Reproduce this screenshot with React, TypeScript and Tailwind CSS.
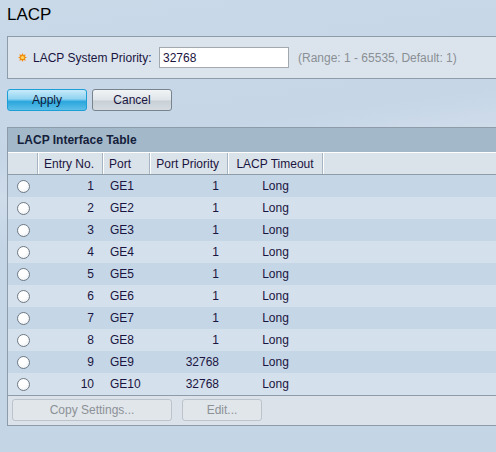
import React from "react";

const rows = [
  { n: 1, port: "GE1", pri: "1" },
  { n: 2, port: "GE2", pri: "1" },
  { n: 3, port: "GE3", pri: "1" },
  { n: 4, port: "GE4", pri: "1" },
  { n: 5, port: "GE5", pri: "1" },
  { n: 6, port: "GE6", pri: "1" },
  { n: 7, port: "GE7", pri: "1" },
  { n: 8, port: "GE8", pri: "1" },
  { n: 9, port: "GE9", pri: "32768" },
  { n: 10, port: "GE10", pri: "32768" },
];

function Star() {
  const pts: string[] = [];
  for (let i = 0; i < 16; i++) {
    const a = (Math.PI * 2 * i) / 16 - Math.PI / 2;
    const r = i % 2 === 0 ? 4.5 : 2.6;
    pts.push(`${(4.5 + r * Math.cos(a)).toFixed(2)},${(4.5 + r * Math.sin(a)).toFixed(2)}`);
  }
  return (
    <svg width="9" height="9" viewBox="0 0 9 9" className="shrink-0">
      <polygon points={pts.join(" ")} fill="#f08c10" />
      <circle cx="4.5" cy="4.5" r="1.6" fill="#ffd860" />
    </svg>
  );
}

function Radio() {
  return (
    <div className="w-[13px] h-[13px] rounded-full border border-[#6f7a84] bg-[radial-gradient(circle_at_40%_35%,#ffffff_40%,#e4e8ec_100%)]" />
  );
}

export default function App() {
  return (
    <div className="w-[496px] h-[452px] overflow-hidden bg-[linear-gradient(172deg,#c9d9e8_0%,#c6d6e7_30%,#cfdcea_38%,#c4d5e6_48%,#c4d5e6_100%)] font-['Liberation_Sans',Arial,sans-serif] text-[12px] text-[#1a1440]">
      <div className="pl-[7px] pt-[5px] h-[36px] text-[17px] leading-[20px] text-black">LACP</div>

      <div className="ml-[7px] h-[43px] border border-r-0 border-[#8d9ca8] bg-[#dbe4ed] flex items-center">
        <div className="w-[10px] shrink-0" />
        <Star />
        <span className="ml-[6px] w-[126px] shrink-0 whitespace-nowrap">LACP System Priority:</span>
        <div className="w-[130px] h-[21px] shrink-0 border border-[#a3a9ae] bg-white pl-[3px] flex items-center leading-none">32768</div>
        <span className="ml-[9px] text-[#8a8f94] whitespace-nowrap">(Range: 1 - 65535, Default: 1)</span>
      </div>

      <div className="mt-[10px] ml-[7px] flex gap-[5px]">
        <div className="w-[80px] h-[22px] rounded-[3px] border border-[#1e9ed6] bg-[linear-gradient(#c8ebfa,#8fd3f1_45%,#2aa6dd_58%,#5ebfe7)] flex items-center justify-center text-[#0e1a3a]">
          Apply
        </div>
        <div className="w-[80px] h-[22px] rounded-[3px] border border-[#77848e] bg-[linear-gradient(#f1f4f6,#dfe5ea_48%,#c8d0d6_56%,#d6dce1)] flex items-center justify-center">
          Cancel
        </div>
      </div>

      <div className="mt-[16px] ml-[7px] border-l border-t border-b border-[#8d9ca8]">
        <div className="h-[24px] bg-[#a3b9ca] pl-[9px] flex items-center font-bold text-[#14203a]">
          LACP Interface Table
        </div>
        <div className="h-[23px] border-t border-b border-t-white border-b-[#8d9ca8] bg-[#dae2ea] flex">
          <div className="w-[30px] shrink-0 border-r border-[#a7b5c2]" />
          <div className="w-[65px] shrink-0 border-r border-[#a7b5c2] shadow-[inset_1px_0_0_#fff] pr-[8px] flex items-center justify-end">Entry No.</div>
          <div className="w-[47px] shrink-0 border-r border-[#a7b5c2] shadow-[inset_1px_0_0_#fff] pl-[6px] flex items-center">Port</div>
          <div className="w-[78px] shrink-0 border-r border-[#a7b5c2] shadow-[inset_1px_0_0_#fff] pr-[8px] flex items-center justify-end">Port Priority</div>
          <div className="w-[95px] shrink-0 border-r border-[#a7b5c2] shadow-[inset_1px_0_0_#fff] flex items-center justify-center">LACP Timeout</div>
          <div className="flex-1 shadow-[inset_1px_0_0_#fff]" />
        </div>
        {rows.map((r, i) => (
          <div key={r.n} className={`h-[22px] flex ${i % 2 === 0 ? "bg-[#c5d6e7]" : "bg-[#d4e0ec]"}`}>
            <div className="w-[30px] shrink-0 flex items-center justify-center">
              <Radio />
            </div>
            <div className="w-[65px] shrink-0 pr-[9px] flex items-center justify-end">{r.n}</div>
            <div className="w-[47px] shrink-0 pl-[7px] flex items-center">{r.port}</div>
            <div className="w-[78px] shrink-0 pr-[9px] flex items-center justify-end">{r.pri}</div>
            <div className="w-[95px] shrink-0 flex items-center justify-center">Long</div>
          </div>
        ))}
        <div className="h-[30px] border-t border-[#8d9ca8] bg-[#dbe2e9] pt-[3px] pl-[4px] flex gap-[10px] items-start">
          <div className="w-[160px] h-[22px] rounded-[3px] border border-[#bcc3ca] bg-[#e1e6eb] text-[#8c9196] flex items-center justify-center">
            Copy Settings...
          </div>
          <div className="w-[80px] h-[22px] rounded-[3px] border border-[#bcc3ca] bg-[#e1e6eb] text-[#8c9196] flex items-center justify-center">
            Edit...
          </div>
        </div>
      </div>
    </div>
  );
}
